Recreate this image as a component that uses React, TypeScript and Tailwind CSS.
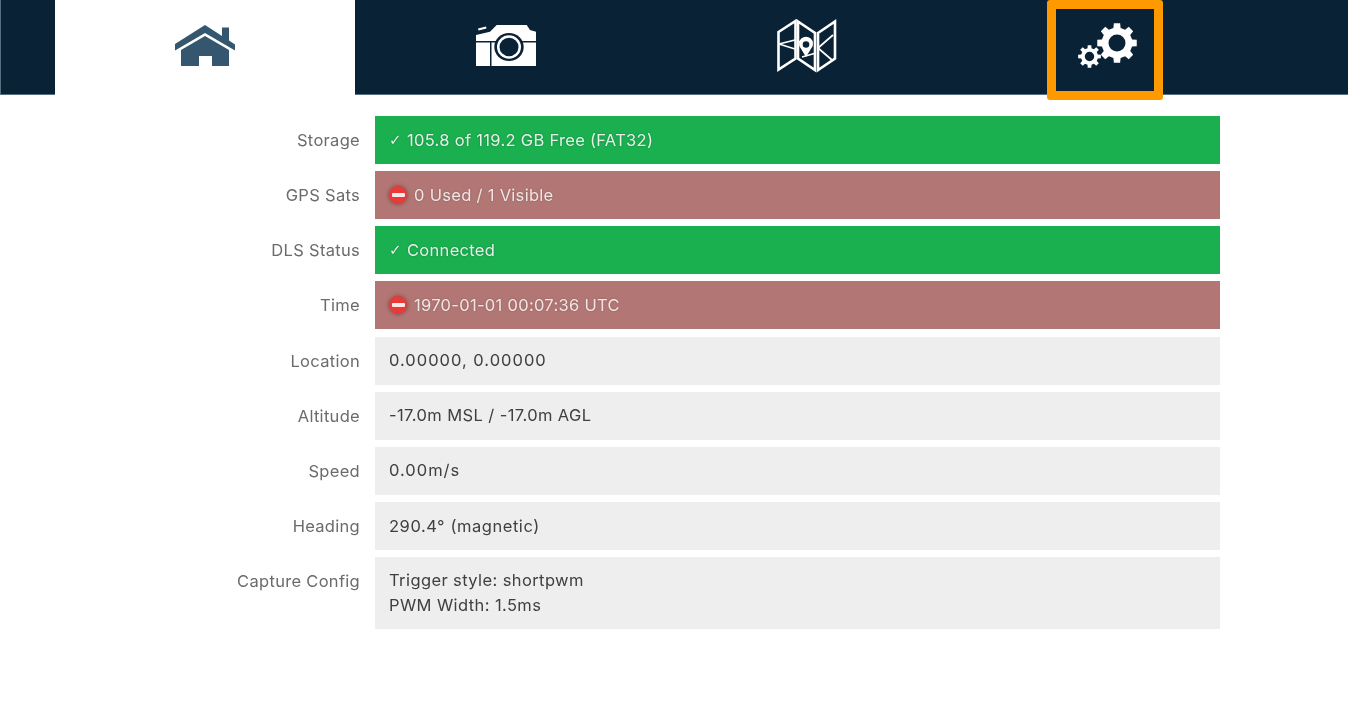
const font = { fontFamily: '"Inter", "Liberation Sans", sans-serif' };

function gearPath(cx: number, cy: number, ro: number, ri: number, hole: number, n: number) {
  const pts: string[] = [];
  const step = (Math.PI * 2) / n;
  for (let i = 0; i < n; i++) {
    const a = i * step - Math.PI / 2;
    const p = [
      [ri, a - step * 0.3],
      [ro, a - step * 0.2],
      [ro, a + step * 0.2],
      [ri, a + step * 0.3],
    ];
    for (const [r, b] of p) pts.push(`${(cx + r * Math.cos(b)).toFixed(2)} ${(cy + r * Math.sin(b)).toFixed(2)}`);
  }
  return `M${pts.join("L")}Z M${cx + hole} ${cy}a${hole} ${hole} 0 1 0 ${-hole * 2} 0a${hole} ${hole} 0 1 0 ${hole * 2} 0Z`;
}

function HomeIcon() {
  return (
    <svg width="60" height="41" viewBox="0 0 60 41" fill="#34566e">
      <path d="M30 0 47 11V2.500H54V15.500L60 19.500V25.500L30 8 0 25.500V19Z" />
      <path d="M30 11 54 25V41H37V31H24V41H6V25Z" />
    </svg>
  );
}

function CameraIcon() {
  return (
    <svg width="60" height="41" viewBox="0 0 60 41" fill="#fff">
      <path d="M0 16V10L14 6.700 20.700 0H50.700L54 5 60 6.700V16Z" />
      <path d="M0 17.500H14V41H0Z" />
      <path d="M15.500 17.500H60V41H15.500Z" />
      <path d="M2 3.500 10 1.500 10.500 3.500 2.500 5.500Z" />
      <ellipse cx="33" cy="22" rx="14.700" ry="14" fill="#0a2235" />
      <ellipse cx="33" cy="22" rx="12" ry="11.800" fill="#fff" />
      <ellipse cx="33" cy="22" rx="9.500" ry="9.300" fill="#0a2235" />
    </svg>
  );
}

function MapIcon() {
  return (
    <svg width="60" height="54" viewBox="0 0 60 54" fill="none" stroke="#fff" strokeWidth="2.600">
      <path d="M1.500 13 18.500 2V39.500L1.500 50.500Z" />
      <path d="M21 2.500 38 14V51L21 39.500Z" />
      <path d="M41 14 58 2.500V39.500L41 51Z" />
      <path d="M2 25 18 21 M2 25 18 30" strokeWidth="1.700" />
      <path d="M41 29 56 16 M41 29 55 41" strokeWidth="1.700" />
      <path d="M25 38 39 34 M21 22 25 25" strokeWidth="1.700" />
      <path d="M29 38 23.500 29A7 7 0 1 1 34.500 29Z" fill="#fff" stroke="none" />
      <circle cx="29" cy="25.500" r="3.300" fill="#0a2235" stroke="none" />
    </svg>
  );
}

function GearIcon() {
  return (
    <svg width="60" height="46" viewBox="0 0 60 46" fill="#fff">
      <path fillRule="evenodd" d={gearPath(39, 20, 20, 15.500, 8.500, 8)} />
      <path fillRule="evenodd" d={gearPath(11.500, 33.500, 11.500, 8.500, 4.700, 8)} />
    </svg>
  );
}

function NoEntry() {
  return (
    <span className="flex h-[18px] w-[18px] shrink-0 items-center justify-center rounded-full bg-[#e93a3a] shadow-[0_0_4px_rgba(70,10,10,0.5)]">
      <span className="h-[4px] w-[13px] rounded-[1px] bg-[#f8e8e8]" />
    </span>
  );
}

type Row = { label: string; status?: "ok" | "bad"; lines: string[]; track?: string };

const rows: Row[] = [
  { label: "Storage", status: "ok", lines: ["105.8 of 119.2 GB Free (FAT32)"] },
  { label: "GPS Sats", status: "bad", lines: ["0 Used / 1 Visible"] },
  { label: "DLS Status", status: "ok", lines: ["Connected"] },
  { label: "Time", status: "bad", lines: ["1970-01-01 00:07:36 UTC"] },
  { label: "Location", lines: ["0.00000, 0.00000"], track: "tracking-[1px]" },
  { label: "Altitude", lines: ["-17.0m MSL / -17.0m AGL"], track: "tracking-[0.4px]" },
  { label: "Speed", lines: ["0.00m/s"], track: "tracking-[1px]" },
  { label: "Heading", lines: ["290.4° (magnetic)"], track: "tracking-[0.55px]" },
  { label: "Capture Config", lines: ["Trigger style: shortpwm", "PWM Width: 1.5ms"], track: "tracking-[0.4px]" },
];

function StatusRow({ row }: { row: Row }) {
  const tone =
    row.status === "ok"
      ? "bg-[#1ab050] text-[#e6f2e8] [text-shadow:0_0_2px_rgba(0,0,0,0.3)]"
      : row.status === "bad"
        ? "bg-[#b27774] text-[#f1e6e5] [text-shadow:0_0_2px_rgba(0,0,0,0.25)]"
        : "bg-[#eeeeee] text-[#404040]";
  const multi = row.lines.length > 1;
  return (
    <div className="flex items-start text-[16.5px] tracking-[0.3px]">
      <div className="w-[360px] shrink-0 pt-[12px] text-right leading-[24px] text-[#6b6b6b]">{row.label}</div>
      <div className={`ml-[15px] w-[845px] px-[14px] leading-[25px] ${multi ? "py-[11px]" : "py-[12px]"} ${tone}`}>
        {multi ? (
          row.lines.map((l) => (
            <div key={l} className={row.track}>
              {l}
            </div>
          ))
        ) : (
          <div className="flex h-[24px] items-center">
            {row.status === "ok" && <span className="mr-[6px] w-[12px] font-['DejaVu_Sans'] text-[15px] font-bold">✓</span>}
            {row.status === "bad" && <span className="mr-[7px]"><NoEntry /></span>}
            <span className={row.track}>{row.lines[0]}</span>
          </div>
        )}
      </div>
    </div>
  );
}

export default function App() {
  return (
    <div className="relative min-h-[710px] bg-white blur-[0.4px]" style={font}>
      <header className="flex h-[95px] border-b border-l border-[#56707f] bg-[#0a2235] pl-[54px]">
        <div className="flex h-[95px] w-[300px] items-start justify-center bg-white pt-[25px]">
          <HomeIcon />
        </div>
        <div className="flex w-[301px] items-start justify-center pt-[25px]">
          <CameraIcon />
        </div>
        <div className="flex w-[301px] items-start justify-center pt-[19px]">
          <MapIcon />
        </div>
        <div className="flex w-[301px] items-start justify-center pt-[23px]">
          <GearIcon />
        </div>
      </header>
      <main className="mt-[21px] flex flex-col gap-[7.17px]">
        {rows.map((r) => (
          <StatusRow key={r.label} row={r} />
        ))}
      </main>
      <div className="absolute left-[1047px] top-0 h-[100px] w-[116px] rounded-[3px] border-[9px] border-[#ff9900]" />
    </div>
  );
}
